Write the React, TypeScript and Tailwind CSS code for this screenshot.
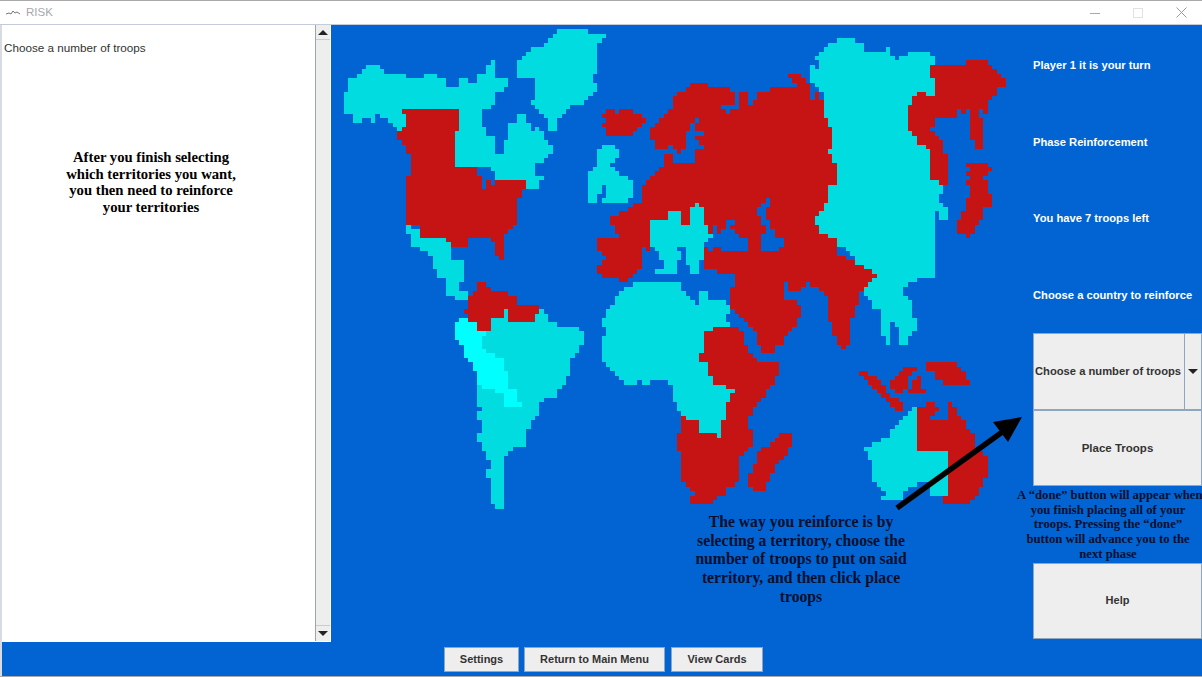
import React from "react";

// Colours of the board
const BLUE = "#0264d3";
const RED = "#c61414";
const CYAN = "#00dcdf";
const BRIGHT = "#00ffff";

// The map is a coarse pixel grid, outlines get snapped onto it
const CELL = 4.44;
const GRID_X = 344;
const GRID_Y = 29.3;

type Pt = [number, number];

// outlines were read off 3x crops, so convert back to screen coordinates
const z = (ox: number, oy: number, s: string): Pt[] =>
    s.trim().split(/\s+/).map((p) => {
        const [x, y] = p.split(",").map(Number);
        return [ox + x / 3, oy + y / 3] as Pt;
    });

const toPath = (poly: Pt[]) => {
    let d = "";
    for (let row = 0; row < 110; row++) {
        const top = GRID_Y + row * CELL;
        const mid = top + CELL / 2;
        const xs: number[] = [];
        poly.forEach((a, i) => {
            const b = poly[(i + 1) % poly.length];
            if ((a[1] <= mid) !== (b[1] <= mid)) {
                xs.push(a[0] + ((mid - a[1]) / (b[1] - a[1])) * (b[0] - a[0]));
            }
        });
        xs.sort((m, n) => m - n);
        for (let i = 0; i + 1 < xs.length; i += 2) {
            const x1 = GRID_X + Math.round((xs[i] - GRID_X) / CELL) * CELL;
            const x2 = GRID_X + Math.round((xs[i + 1] - GRID_X) / CELL) * CELL;
            if (x2 > x1) {
                d += `M${x1.toFixed(1)} ${top.toFixed(1)}H${x2.toFixed(1)}V${(top + CELL).toFixed(1)}H${x1.toFixed(1)}Z`;
            }
        }
    }
    return d;
};

const canada = z(340, 25, "12,205 25,190 25,165 50,165 65,138 78,125 117,125 143,150 195,150 195,163 247,163 247,152 287,152 287,163 315,163 327,190 352,190 365,163 380,163 380,177 405,177 405,165 420,150 433,150 445,125 458,125 458,110 470,110 470,125 460,125 460,165 485,165 485,152 497,152 497,165 510,165 510,190 485,190 485,205 460,205 460,233 445,233 445,247 420,247 420,300 433,300 433,330 470,343 470,385 485,385 485,343 497,343 510,315 510,287 525,287 525,262 563,262 563,287 578,287 578,315 590,315 590,300 603,300 603,315 618,315 618,343 630,343 630,358 643,358 643,385 630,385 630,400 618,400 618,410 578,410 590,428 590,455 618,455 618,467 603,467 603,495 563,495 563,467 470,467 470,450 445,440 445,428 405,425 340,425 340,315 354,315 354,247 183,247 183,262 195,262 195,300 183,300 183,315 170,315 170,300 155,300 143,275 117,275 117,262 103,262 103,287 90,287 90,275 65,275 65,287 52,300 38,287 38,275 25,262 12,262");
const usa = z(340, 25, "183,247 354,247 354,315 340,315 340,425 405,425 405,455 420,455 420,495 433,495 433,467 445,467 445,480 470,485 470,467 550,467 563,455 563,495 550,495 550,520 538,520 525,550 538,565 538,590 525,590 525,605 497,633 485,660 497,660 497,700 472,700 460,660 445,645 380,645 380,660 327,660 315,645 287,635 235,635 235,605 208,605 195,592 195,455 208,455 208,385 195,385 195,358 183,358 183,343 170,343 170,315 183,315 195,300 195,262 183,262");
const centralAmerica: Pt[] = [[405, 222], [409, 227], [418, 227], [418, 237], [436, 237], [445, 240], [449, 245], [449, 259], [466, 259], [466, 269], [462, 272], [466, 278], [458, 282], [458, 291], [470, 291], [466, 300], [453, 300], [453, 296], [448, 296], [448, 287], [444, 278], [440, 278], [434, 265], [431, 265], [431, 255], [420, 248], [426, 262], [420, 250], [409, 245], [409, 235], [405, 230]];
const greenland = z(340, 25, "657,13 747,13 747,27 800,27 800,38 773,50 773,150 762,150 762,178 773,178 773,190 748,220 733,233 697,235 670,262 657,275 657,315 630,315 618,285 578,245 578,220 590,205 578,165 525,150 538,135 538,110 578,67 618,65 618,52");
const iceland = z(590, 80, "52,82 78,82 78,95 90,95 90,82 130,82 130,95 157,95 157,110 170,110 170,122 157,122 157,137 143,137 143,150 130,150 130,165 52,165 52,137 38,137 38,122 52,122 52,110 38,110 38,95 52,95");
const britain = z(590, 80, "38,193 78,193 78,207 90,207 90,235 78,235 78,247 65,247 65,260 78,260 78,275 90,275 90,288 118,288 118,303 130,303 130,358 118,358 118,372 38,372 38,358 52,358 52,318 38,318 38,345 25,345 25,372 0,372 0,275 12,275 12,260 25,260 25,207 38,207");

const southAmerica = z(440, 265, "66,150 80,163 105,175 120,203 145,203 145,150 158,150 158,163 185,163 185,150 198,150 198,135 210,135 210,175 278,175 290,150 303,150 303,135 316,135 330,175 357,175 357,190 422,190 422,203 434,203 434,245 422,245 422,260 397,275 397,328 383,328 383,355 370,355 370,370 357,370 357,398 318,398 303,412 303,452 290,452 278,465 278,495 263,495 250,510 263,522 263,535 250,548 225,548 210,565 198,575 198,630 185,630 198,635 198,660 185,660 185,700 198,703 198,715 185,715 185,730 170,730 158,715 158,688 145,688 145,632 132,632 132,620 145,618 145,590 132,565 120,560 120,535 105,535 105,510 120,510 120,465 105,465 105,438 120,438 120,425 105,425 105,315 92,290 66,272 66,245 52,232 40,230 40,177 52,177 66,163");
const andes = z(440, 265, "52,177 66,163 66,150 80,163 105,175 120,203 132,205 132,218 120,218 120,245 145,270 185,275 198,290 198,315 210,315 210,370 225,370 225,383 238,383 238,412 250,424 198,424 198,385 170,383 170,370 132,370 120,355 105,342 105,315 92,290 66,272 66,245 52,232 40,230 40,177");
const venezuela = z(440, 265, "118,52 132,52 132,65 145,65 145,78 210,78 210,92 225,92 225,105 238,105 238,122 303,122 303,150 290,150 278,175 210,175 210,135 198,135 198,150 185,150 185,163 158,163 158,150 145,150 145,203 120,203 105,175 80,163 80,150 66,150 66,135 80,135 80,92 105,78 105,65 118,65");

const northAfrica = z(440, 265, "580,52 725,52 725,78 750,92 750,105 765,118 778,118 778,78 803,78 803,92 816,105 855,105 868,122 868,150 855,150 855,175 868,175 868,190 816,190 816,203 790,203 790,260 778,260 778,288 803,300 803,328 816,328 816,355 855,355 855,370 882,370 882,383 870,383 870,410 855,410 855,465 845,465 845,522 830,522 830,508 778,508 778,465 735,465 735,452 722,452 712,425 697,410 697,355 670,342 632,342 632,355 605,355 605,342 592,355 552,355 552,342 540,342 525,328 512,315 500,300 487,288 487,215 500,215 500,190 487,190 487,165 500,165 500,135 512,135 512,122 526,122 526,92 552,65 580,65");
const eastAfrica = z(440, 265, "816,190 895,190 895,203 908,203 908,232 920,232 920,260 935,260 935,272 948,272 948,300 1012,288 1012,328 1000,328 1000,355 987,355 987,370 975,370 975,398 960,398 960,412 935,425 935,452 920,452 920,495 934,495 934,548 920,548 920,560 908,562 908,575 895,575 895,645 882,645 882,660 855,672 855,685 830,688 830,703 816,703 816,715 750,715 750,688 765,685 765,672 750,672 735,660 725,645 725,562 712,562 712,508 725,508 725,452 735,452 735,465 778,465 778,508 830,508 830,522 845,522 845,465 855,465 855,410 870,410 870,383 882,383 882,370 855,370 855,355 816,355 816,328 803,328 803,300 778,288 778,260 790,260 790,203 816,203");
const madagascar: Pt[] = [[780, 434], [793, 434], [793, 445], [785, 455], [773, 472], [765, 489], [752, 489], [747, 482], [752, 472], [760, 448], [772, 444]];

const siberia = [
    ...z(680, 25, "465,38 530,38 530,52 556,52 556,80 620,80 620,67 635,67 635,95 650,95 650,108 662,95 690,95 690,80 753,80 753,95 766,95 766,218 740,218 740,205 715,205 715,218 702,218 702,245 690,245 690,315 702,315 702,330 715,330 715,358 740,358 740,372 753,372 753,468 780,468 780,482 793,482 793,510 780,510 780,535 793,535 793,550 805,550 805,592 780,592 780,565 766,565 766,720"),
    ...z(690, 190, "735,265 685,265 685,277 660,277 660,290 645,290 645,318 660,318 660,332 670,332 670,390 685,390 685,428 672,428 672,443 660,443 660,457 632,457 632,415 618,415 618,402 605,402 605,457 592,457 592,443 580,443 580,362 552,362 552,332 540,332 540,318 527,318 520,290 500,250 500,200"),
    ...z(680, 25, "380,600 420,500 420,300 425,232 425,205 412,205 412,190 398,190 398,178 387,178 387,125 400,125 400,135 412,135 412,108 400,108 400,95 412,95 412,80 425,80 425,67 438,67 438,52 465,52"),
];

const eurasia = [
    ...z(590, 80, "300,13 353,13 353,25 420,25 420,40 432,40 432,68 395,68 395,80 405,95 420,95 420,82 445,82 445,28 458,28 458,40 472,40 472,68 485,68 485,55 497,55 497,40 510,40 510,28 540,28"),
    ...z(680, 25, "345,190 345,178 333,178 333,165 320,165 320,152 358,152 358,165 372,165 372,178 387,178 387,232 398,232 398,205 412,205 412,232 425,232 425,275 438,275 438,300 452,300 452,370 438,372 438,385 452,385 452,410 465,410 465,438 477,438 477,465 465,468 465,482 452,482 438,495 438,535 425,535 425,565 412,565 398,578 398,605 412,605 412,620 438,622 438,635 465,635 465,660 477,660 477,688 503,688 503,702 530,702 530,715 556,718"),
    ...z(690, 190, "525,235 552,237 552,250 565,250 565,262 552,265 552,275 540,277 540,290 527,290 527,303 513,303 513,345 500,345 500,385 487,390 487,455 472,458 472,472 460,472 460,458 447,457 447,445 433,443 433,430 422,430 422,402 408,402 408,318 395,318 395,305 382,305 382,290 357,290 357,277 343,277 343,290 328,290 328,305 290,305 290,277 278,277 278,318 290,332 317,332 328,345 328,388 317,390 317,415 303,415 303,430 290,430 277,445 277,457 263,458 250,470 250,484 210,484 210,458 197,458 197,430 185,430 185,415 172,415 172,402 158,390 145,388 145,375 132,375 132,362 120,360 120,290 132,290 132,250 80,250 80,237 40,237 40,165"),
    ...z(590, 80, "340,495 182,495 182,508 170,508 170,495 157,495 157,566 143,566 143,580 130,580 130,592 118,592 118,605 90,605 90,592 38,592 38,578 25,578 25,550 38,550 38,537 52,537 52,522 38,522 38,508 25,508 25,480 90,480 90,455 78,455 78,440 65,440 65,413 90,413 90,400 118,400 118,385 130,385 130,372 157,372 157,318 170,318 170,303 182,303 182,288 195,288 195,275 208,275 208,260 222,260 222,222 247,222 247,245 315,245 315,207 340,207 340,193 327,193 327,180 287,180 287,207 275,207 275,220 262,220 262,207 247,207 247,193 235,193 235,207 195,207 195,178 182,178 182,137 195,137 195,122 208,122 208,110 222,110 222,95 235,95 235,82 247,82 247,55 262,40 287,40 287,25"),
];
const farEast = z(680, 25, "753,122 858,122 858,108 925,108 925,122 938,122 938,138 952,138 952,150 965,150 965,163 977,163 977,190 952,190 952,218 938,218 938,232 925,232 925,262 912,262 912,248 900,248 900,275 912,275 912,370 885,370 885,345 873,345 873,248 860,248 860,262 847,262 847,248 833,248 833,275 766,275 766,300 755,302 755,315 766,315 766,330 780,330 780,345 793,345 793,385 805,385 805,482 780,482 780,468 753,468 753,372 740,372 740,358 715,358 715,330 702,330 702,315 690,315 690,245 702,245 702,218 715,218 715,205 740,205 740,218 766,218 766,162 753,162");
const japan = z(680, 25, "858,412 925,412 925,425 938,425 938,438 925,438 925,452 912,452 912,468 925,468 925,510 938,510 938,548 912,548 912,590 898,592 898,605 885,605 885,632 873,632 873,645 860,645 860,632 847,632 847,620 833,620 833,580 847,580 847,563 860,563 860,522 873,522 873,482 860,482 860,468 873,468 873,452 860,452 860,438 873,438 873,425 858,425");
const centralEurope = z(590, 80, "182,415 235,415 235,400 275,400 275,428 300,428 300,387 315,387 315,372 327,372 327,387 340,387 340,440 353,440 353,455 365,455 365,470 353,470 353,482 340,482 340,537 327,537 327,580 300,580 300,552 287,552 287,495 262,495 262,510 275,510 275,537 262,537 262,580 195,580 195,566 222,566 222,537 208,537 208,510 195,510 195,495 182,495");
const baltic = z(590, 80, "300,122 315,122 315,150 340,150 340,165 315,165 315,180 287,180 287,150 300,150");
const balticDot = z(590, 80, "315,110 327,110 327,122 315,122");
const blackSea = z(690, 190, "55,140 65,140 65,98 78,98 78,125 92,125 105,112 105,85 132,85 132,98 120,98 120,112 132,112 132,125 145,125 145,140 158,140 170,152 170,180 92,180 92,165 65,165 65,180 52,180 52,165 40,165 40,152 55,152");
const caspian = z(690, 190, "222,28 238,28 238,52 225,55 225,85 238,85 238,112 250,112 250,140 277,140 277,165 263,165 263,180 210,180 210,125 222,125 222,98 210,98 210,82 198,82 198,55 210,55 210,42 222,42");

const australiaWest = z(850, 355, "192,155 205,155 205,292 295,292 295,415 245,415 245,378 205,378 205,390 178,390 178,403 165,403 165,430 100,430 100,418 112,418 112,403 100,403 100,390 87,390 87,378 72,378 72,320 60,320 60,292 47,292 47,280 72,280 72,267 100,267 100,253 125,253 125,225 138,225 138,212 152,212 152,198 165,198 165,185 178,185 178,168 192,168");
const australiaEast = z(850, 355, "205,155 230,155 230,143 255,143 255,155 270,155 270,167 257,167 257,180 245,180 245,195 295,195 295,143 308,143 308,155 322,155 322,180 335,180 335,197 348,197 348,225 362,225 362,240 375,240 375,292 400,292 400,305 413,305 413,362 400,362 400,390 388,390 388,418 375,418 375,430 362,430 362,443 285,443 285,418 295,418 295,292 205,292");
const sumatra = z(850, 355, "32,45 58,45 58,58 85,58 85,72 98,72 98,85 112,85 112,112 125,112 125,130 150,130 150,143 165,143 165,168 140,168 140,155 125,155 125,140 112,140 112,127 98,127 98,112 85,112 85,100 72,100 72,85 58,85 58,72 45,72 45,58 32,58");
const borneo = z(850, 355, "165,30 205,30 205,42 192,42 192,58 178,58 178,100 165,100 165,112 140,112 140,100 125,100 125,72 140,72 140,58 152,58 152,45 165,45");
const sulawesi = z(850, 355, "205,58 215,58 215,100 230,100 230,112 180,112 180,100 192,100 192,72 205,72");
const newGuinea = z(850, 355, "232,18 322,18 322,30 335,30 335,45 348,45 348,72 362,72 362,87 285,87 285,72 257,72 257,45 232,45");

// painted in this order, later ones sit on top
const LAYERS: [Pt[], string][] = [
    [centralAmerica, CYAN], [canada, CYAN], [usa, RED], [greenland, CYAN], [iceland, RED], [britain, CYAN],
    [southAmerica, CYAN], [andes, BRIGHT], [venezuela, RED],
    [northAfrica, CYAN], [eastAfrica, RED], [madagascar, RED],
    [siberia, CYAN], [eurasia, RED], [farEast, RED], [japan, RED], [centralEurope, CYAN],
    [baltic, BLUE], [balticDot, BLUE], [blackSea, BLUE], [caspian, BLUE],
    [australiaWest, CYAN], [australiaEast, RED], [sumatra, RED], [borneo, RED], [sulawesi, RED], [newGuinea, RED],
];

const WorldMap = () => (
    <svg viewBox="331 25 702 620" className="block w-[702px] h-[620px]" shapeRendering="crispEdges">
        {LAYERS.map(([poly, fill], i) => (
            <path key={i} d={toPath(poly)} fill={fill} />
        ))}
        {/* arrow pointing at the Place Troops button */}
        <g shapeRendering="auto">
            <line x1="897" y1="508" x2="1005" y2="430" stroke="#000" strokeWidth="5.5" />
            <polygon points="993,422 1022,417 1008,442" fill="#000" />
        </g>
    </svg>
);

const Caption = ({ className, lines }: { className: string; lines: string[] }) => (
    <div className={`absolute text-center font-bold whitespace-nowrap font-['Liberation_Serif',serif] ${className}`}>
        {lines.map((l) => (
            <div key={l}>{l}</div>
        ))}
    </div>
);

const BarButton = ({ label, className }: { label: string; className: string }) => (
    <button className={`h-[25px] bg-[#eeeeee] border border-[#8fa6bf] text-[11px] font-bold text-[#333333] ${className}`}>
        {label}
    </button>
);

const InfoLabel = ({ text }: { text: string }) => (
    <div className="flex items-center whitespace-nowrap pt-[1px] text-[11.2px] font-bold text-white">{text}</div>
);

const TitleBar = () => (
    <div className="h-[23px] shrink-0 bg-white flex items-center">
        <svg width="14" height="8" viewBox="0 0 14 8" className="ml-[6px]">
            <path d="M0 5 L3 4 L5 5 L7 2 L9 4 L11 3 L14 5" fill="none" stroke="#777777" strokeWidth="1" />
        </svg>
        <span className="ml-[6px] text-[11.5px] text-[#a8a8a8]">RISK</span>
        <div className="ml-auto flex items-center">
            <svg width="10" height="10" viewBox="0 0 10 10" className="mr-[33px]">
                <line x1="0" y1="5.5" x2="10" y2="5.5" stroke="#a8a8a8" />
            </svg>
            <svg width="10" height="10" viewBox="0 0 10 10" className="mr-[33px]">
                <rect x="0.5" y="0.5" width="9" height="9" fill="none" stroke="#e2e2e2" />
            </svg>
            <svg width="11" height="11" viewBox="0 0 11 11" className="mr-[15px]">
                <path d="M0.5 0.5 L10.5 10.5 M10.5 0.5 L0.5 10.5" stroke="#9a9a9a" />
            </svg>
        </div>
    </div>
);

const TriangleUp = () => <div className="w-0 h-0 border-x-[5px] border-x-transparent border-b-[5px] border-b-[#222222]" />;
const TriangleDown = () => <div className="w-0 h-0 border-x-[5px] border-x-transparent border-t-[5px] border-t-[#222222]" />;

const LogPanel = () => (
    <div className="relative w-[329px] h-[617px] shrink-0 flex bg-white border-r border-b border-white">
        <div className="flex-1 pt-[14px] pl-[2px] text-[11.7px] text-[#333333]">Choose a number of troops</div>
        <div className="w-[15px] flex flex-col bg-[#eeeeee] border-l border-[#9aa5b2]">
            <div className="h-[15px] flex items-center justify-center border-b border-[#b8cfe5]">
                <TriangleUp />
            </div>
            <div className="flex-1 border-b border-[#b8cfe5]" />
            <div className="h-[15px] flex items-center justify-center">
                <TriangleDown />
            </div>
        </div>
        <Caption
            className="left-0 top-[124px] w-[298px] text-[14.7px] leading-[16.7px] text-black"
            lines={["After you finish selecting", "which territories you want,", "you then need to reinforce", "your territories"]}
        />
    </div>
);

const App: React.FC = () => {
    return (
        <div className="w-full h-[677px] flex flex-col overflow-hidden border-t border-b border-[#a9a9a9] bg-[#0264d3] font-['Liberation_Sans',sans-serif]">
            <TitleBar />
            <div className="h-px shrink-0 bg-[#c4cbdb]" />
            <div className="flex-1 flex flex-col border-l-2 border-[#d8dbe2]">
                <div className="h-[617px] flex">
                    <LogPanel />
                    <div className="relative w-[702px] h-[620px] shrink-0">
                        <WorldMap />
                        <Caption
                            className="left-[320px] top-[488px] w-[300px] text-[15.7px] leading-[18.7px] text-[#050f2c]"
                            lines={[
                                "The way you reinforce is by",
                                "selecting a territory, choose the",
                                "number of troops to put on said",
                                "territory, and then click place",
                                "troops",
                            ]}
                        />
                    </div>
                    <div className="w-[169px] shrink-0 pt-[2px]">
                        <div className="h-[612px] grid grid-rows-8">
                            <InfoLabel text="Player 1 it is your turn" />
                            <InfoLabel text="Phase Reinforcement" />
                            <InfoLabel text="You have 7 troops left" />
                            <InfoLabel text="Choose a country to reinforce" />
                            <div className="flex border border-[#8fa6bf] bg-[#eeeeee]">
                                <div className="flex-1 flex items-center whitespace-nowrap pl-[1px] text-[11.2px] font-bold text-[#333333] border-r border-[#8fa6bf]">
                                    Choose a number of troops
                                </div>
                                <div className="w-[16px] flex items-center justify-center">
                                    <TriangleDown />
                                </div>
                            </div>
                            <button className="bg-[#eeeeee] border border-[#8fa6bf] pt-[1px] text-[11.5px] font-bold text-[#333333]">
                                Place Troops
                            </button>
                            <div className="relative">
                                <Caption
                                    className="-left-[16px] top-[2px] w-[182px] text-[12.7px] leading-[14.7px] text-[#050f2c]"
                                    lines={[
                                        "A “done” button will appear when",
                                        "you finish placing all of your",
                                        "troops. Pressing the “done”",
                                        "button will advance you to the",
                                        "next phase",
                                    ]}
                                />
                            </div>
                            <button className="bg-[#eeeeee] border border-[#8fa6bf] pb-[1px] text-[11px] font-bold text-[#333333]">Help</button>
                        </div>
                    </div>
                </div>
                <div className="flex justify-center gap-[5px] pt-[5px] pl-[3px]">
                    <BarButton label="Settings" className="w-[75px]" />
                    <BarButton label="Return to Main Menu" className="w-[141px]" />
                    <BarButton label="View Cards" className="w-[92px] ml-px" />
                </div>
            </div>
        </div>
    );
};

export default App;
